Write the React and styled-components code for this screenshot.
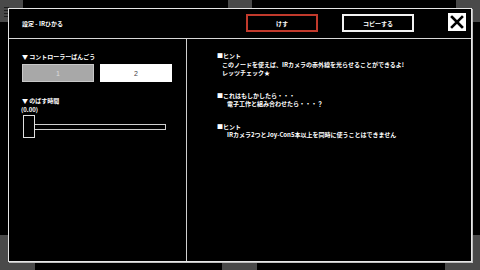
import React from "react";
import styled, { createGlobalStyle } from "styled-components";

const GlobalStyle = createGlobalStyle`
  html, body {
    margin: 0;
    padding: 0;
    width: 480px;
    height: 270px;
    overflow: hidden;
    background: #000;
  }
  * { box-sizing: border-box; }
  body {
    font-family: "Noto Sans CJK JP", "Noto Sans", "Liberation Sans", sans-serif;
    color: #fff;
  }
`;

const Screen = styled.div`
  position: relative;
  width: 480px;
  height: 270px;
  padding: 8px;
  display: flex;
  background: #000;
`;

const Backdrop = styled.div`
  position: absolute;
  left: ${(p) => p.x}px;
  top: ${(p) => p.y}px;
  width: ${(p) => p.w}px;
  height: ${(p) => p.h}px;
  background: #4a4a4a;
  z-index: 0;
`;

const BackdropIcon = styled.div`
  position: absolute;
  left: 4px;
  top: 7px;
  width: 5px;
  display: flex;
  flex-direction: column;
  gap: 2px;
  & > span {
    height: 1px;
    background: #1e1e1e;
  }
`;

const Panel = styled.div`
  position: relative;
  z-index: 1;
  flex: 1;
  display: flex;
  flex-direction: column;
  background: #000;
  border: 1px solid #e6e6e6;
  box-shadow: 1px 1px 0 #bdbdbd;
`;

const Header = styled.div`
  height: 30px;
  flex: none;
  display: flex;
  align-items: center;
  padding: 0 5px 1px 13px;
  border-bottom: 1px solid #d8d8d8;
`;

const Title = styled.div`
  font-size: 6px;
  font-weight: 700;
  line-height: 9px;
  margin-top: 1px;
  color: #fff;
`;

const Actions = styled.div`
  margin-left: auto;
  display: flex;
  align-items: center;
`;

const ActionButton = styled.div`
  width: 72px;
  height: 18px;
  margin-right: ${(p) => p.gap}px;
  display: flex;
  align-items: center;
  justify-content: center;
  border: 2px solid ${(p) => (p.danger ? "#c23a2c" : "#f2f2f2")};
  font-size: 6px;
  font-weight: 700;
  color: #fff;
`;

const CloseButton = styled.div`
  width: 18px;
  height: 18px;
  margin-top: -2px;
  background: #fff;
  display: flex;
  align-items: center;
  justify-content: center;
`;

const Body = styled.div`
  flex: 1;
  display: grid;
  grid-template-columns: 178px 1fr;
`;

const LeftColumn = styled.div`
  border-right: 1px solid #d0d0d0;
  padding: 13px 0 0 13px;
  display: flex;
  flex-direction: column;
`;

const Label = styled.div`
  font-size: 6px;
  font-weight: 700;
  line-height: 9px;
  margin-top: ${(p) => p.mt || 0}px;
  margin-left: ${(p) => p.ml || 0}px;
  color: #fff;
`;

const ChoiceRow = styled.div`
  display: flex;
  gap: 6px;
  margin-top: 3px;
`;

const Choice = styled.div`
  width: 72px;
  height: 18px;
  display: flex;
  align-items: center;
  justify-content: center;
  font-family: "Liberation Sans", sans-serif;
  font-size: 7px;
  background: ${(p) => (p.active ? "#fff" : "#a8a8a8")};
  border: 1px solid ${(p) => (p.active ? "#fff" : "#c8c8c8")};
  color: ${(p) => (p.active ? "#444" : "#dcdcdc")};
`;

const Slider = styled.div`
  display: flex;
  align-items: center;
  margin-top: 1px;
  margin-left: 1px;
`;

const Handle = styled.div`
  width: 12px;
  height: 23px;
  border: 1px solid #e0e0e0;
  background: #000;
`;

const Track = styled.div`
  width: 131px;
  height: 6px;
  margin-top: 1px;
  border: 1px solid #cfcfcf;
  border-left: none;
  background: #000;
`;

const RightColumn = styled.div`
  padding: 13px 0 0 30px;
  display: flex;
  flex-direction: column;
  gap: 14px;
`;

const HintBlock = styled.div`
  display: flex;
  flex-direction: column;
`;

const HintLine = styled.div`
  font-size: 6px;
  font-weight: 700;
  line-height: 8.5px;
  padding-left: ${(p) => p.indent || 0}px;
  color: #fff;
  white-space: nowrap;
`;

const hints = [
  {
    title: "■ヒント",
    indent: 5,
    lines: [
      "このノードを使えば、IRカメラの赤外線を光らせることができるよ!",
      "レッツチェック★",
    ],
  },
  {
    title: "■これはもしかしたら・・・",
    indent: 10,
    lines: ["電子工作と組み合わせたら・・・？"],
  },
  {
    title: "■ヒント",
    indent: 10,
    lines: ["IRカメラ2つとJoy-Con5本以上を同時に使うことはできません"],
  },
];

export default function App() {
  return (
    <>
      <GlobalStyle />
      <Screen>
        <Backdrop x={0} y={0} w={23} h={22}>
          <BackdropIcon>
            <span />
            <span />
            <span />
            <span />
          </BackdropIcon>
        </Backdrop>
        <Backdrop x={456} y={0} w={24} h={22} />
        <Backdrop x={228} y={0} w={24} h={8} />
        <Backdrop x={0} y={235} w={35} h={35} />
        <Backdrop x={445} y={235} w={35} h={35} />
        <Backdrop x={222} y={262} w={35} h={8} />
        <Panel>
          <Header>
            <Title>設定 - IRひかる</Title>
            <Actions>
              <ActionButton danger gap={24}>けす</ActionButton>
              <ActionButton gap={34}>コピーする</ActionButton>
              <CloseButton>
                <svg width="14" height="14" viewBox="0 0 14 14">
                  <path
                    d="M2 2 L12 12 M12 2 L2 12"
                    stroke="#000"
                    strokeWidth="2.6"
                    strokeLinecap="square"
                  />
                </svg>
              </CloseButton>
            </Actions>
          </Header>
          <Body>
            <LeftColumn>
              <Label>▼ コントローラーばんごう</Label>
              <ChoiceRow>
                <Choice>1</Choice>
                <Choice active>2</Choice>
              </ChoiceRow>
              <Label mt={14}>▼ のばす時間</Label>
              <Label ml={-1}>(0.00)</Label>
              <Slider>
                <Handle />
                <Track />
              </Slider>
            </LeftColumn>
            <RightColumn>
              {hints.map((h, i) => (
                <HintBlock key={i}>
                  <HintLine>{h.title}</HintLine>
                  {h.lines.map((l, j) => (
                    <HintLine key={j} indent={h.indent}>
                      {l}
                    </HintLine>
                  ))}
                </HintBlock>
              ))}
            </RightColumn>
          </Body>
        </Panel>
      </Screen>
    </>
  );
}
